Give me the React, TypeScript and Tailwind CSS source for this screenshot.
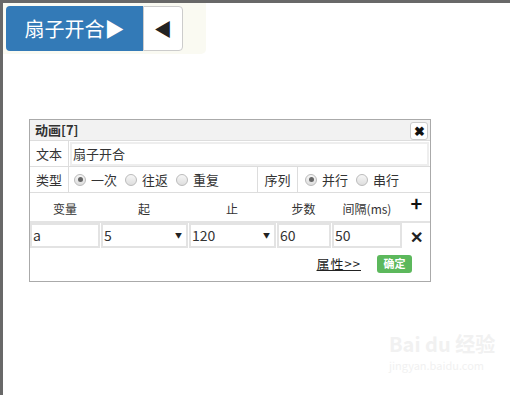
import React from 'react';

const font = { fontFamily: '"Noto Sans CJK SC", "Liberation Sans", sans-serif' };

function Radio({ checked, label }: { checked?: boolean; label: string }) {
  return (
    <label className="flex items-center gap-[5px] mr-[8px]">
      <span className="w-[12px] h-[12px] rounded-full border border-[#bbb] bg-gradient-to-b from-[#f6f6f6] to-[#dedede] flex items-center justify-center">
        {checked && <span className="w-[5px] h-[5px] rounded-full bg-[#666]" />}
      </span>
      <span>{label}</span>
    </label>
  );
}

function Field({ value, w, select }: { value: string; w: string; select?: boolean }) {
  return (
    <div className={`${w} h-[25px] border-2 border-[#e3e3e3] bg-white flex items-center justify-between pl-[1px] pr-[4px]`}>
      <span>{value}</span>
      {select && <span className="text-[7px] text-[#222]">▼</span>}
    </div>
  );
}

export default function App() {
  return (
    <div
      className="w-[510px] h-[395px] bg-white border-t-[3px] border-l-[3px] border-[#686868] relative overflow-hidden text-[13px] text-[#333]"
      style={font}
    >
      {/* toolbar */}
      <div className="w-[203px] h-[51px] bg-[#fafaf2] rounded-br-[5px] pt-[3px] pl-[3px]">
        <div className="flex h-[45px]">
          <div className="w-[137px] bg-[#337ab7] rounded-l-[4px] flex items-center justify-center text-white text-[20px]">
            扇子开合▶
          </div>
          <div className="w-[40px] bg-white border border-[#ccc] rounded-r-[4px] flex items-center justify-center text-[18px] text-[#222]">
            ◀
          </div>
        </div>
      </div>

      {/* dialog */}
      <div className="ml-[26px] mt-[65px] w-[402px] h-[163px] border border-[#aaa] bg-white">
        <div className="h-[21px] bg-[#f2f2f2] border-b border-[#ddd] flex items-center justify-between pl-[5px] pr-[2px]">
          <span className="font-bold text-[13px] text-[#333]">动画[7]</span>
          <span className="w-[18px] h-[18px] bg-white border border-[#ccc] rounded-[3px] flex items-center justify-center text-[13px] font-bold text-[#111] mt-[2px]">
            ✖
          </span>
        </div>

        <div className="flex h-[26px] border-b border-[#ddd]">
          <div className="w-[39px] border-r border-[#ddd] flex items-center justify-center">文本</div>
          <div className="flex-1 flex items-center pl-[1px] pr-[1px]">
            <div className="w-full h-[24px] border-2 border-[#eee] flex items-center pl-[1px]">扇子开合</div>
          </div>
        </div>

        <div className="flex h-[26px] border-b border-[#ddd]">
          <div className="w-[39px] border-r border-[#ddd] flex items-center justify-center">类型</div>
          <div className="w-[189px] border-r border-[#ddd] flex items-center pl-[5px]">
            <Radio checked label="一次" />
            <Radio label="往返" />
            <Radio label="重复" />
          </div>
          <div className="w-[40px] border-r border-[#ddd] flex items-center justify-center">序列</div>
          <div className="flex-1 flex items-center pl-[7px]">
            <Radio checked label="并行" />
            <Radio label="串行" />
          </div>
        </div>

        <div className="flex items-end h-[30px] pb-[3px] border-b-2 border-[#e3e3e3] text-[12px]">
          <div className="w-[70px] text-center">变量</div>
          <div className="w-[88px] text-center">起</div>
          <div className="w-[88px] text-center">止</div>
          <div className="w-[55px] text-center">步数</div>
          <div className="w-[72px] text-center">间隔(ms)</div>
          <div className="flex-1 text-center text-[20px] font-bold leading-[22px] text-[#111] mb-[4px]">+</div>
        </div>

        <div className="flex items-center gap-[1px] text-[14px]">
          <Field value="a" w="w-[70px]" />
          <Field value="5" w="w-[87px]" select />
          <Field value="120" w="w-[87px]" select />
          <Field value="60" w="w-[54px]" />
          <Field value="50" w="w-[70px]" />
          <div className="flex-1 text-center text-[16px] font-bold text-[#222]">✕</div>
        </div>

        <div className="flex items-center justify-end h-[31px] pr-[18px] gap-[16px]">
          <span className="underline text-[13px] text-[#222] tracking-[1px]">属性&gt;&gt;</span>
          <span className="w-[35px] h-[18px] bg-[#5cb85c] rounded-[3px] text-white text-[11px] font-bold flex items-center justify-center">
            确定
          </span>
        </div>
      </div>

      {/* watermark */}
      <div className="absolute left-[386px] top-[330px] text-[#f1f1f1] select-none flex flex-col gap-[4px]">
        <div className="text-[20px] font-bold leading-[22px]">Bai du 经验</div>
        <div className="text-[11px] leading-[12px]">jingyan.baidu.com</div>
      </div>
    </div>
  );
}
